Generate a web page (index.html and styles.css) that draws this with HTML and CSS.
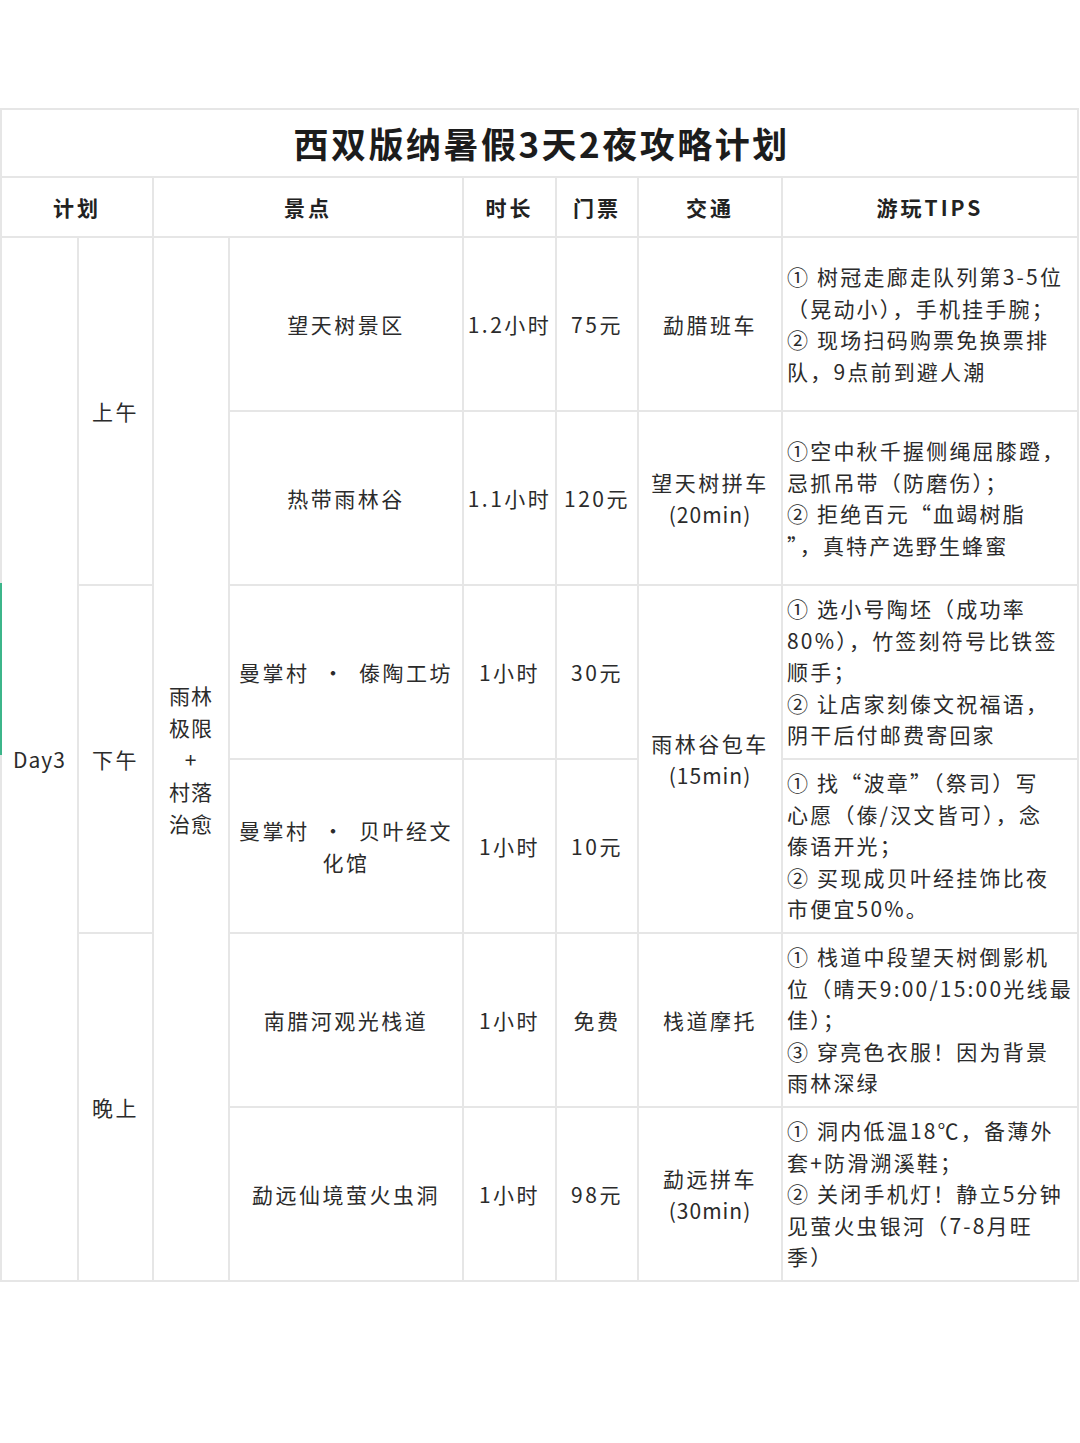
FILE: index.html
```html
<!DOCTYPE html>
<html lang="zh-CN">
<head>
<meta charset="utf-8">
<title>西双版纳暑假3天2夜攻略计划</title>
<link rel="stylesheet" href="styles.css">
</head>
<body>
<div class="page">
  <div class="edge-mark"></div>
  <table class="plan">
    <colgroup>
      <col class="c-day"><col class="c-part"><col class="c-theme"><col class="c-spot">
      <col class="c-time"><col class="c-ticket"><col class="c-traffic"><col class="c-tips">
    </colgroup>
    <tr class="title-row"><th colspan="8">西双版纳暑假3天2夜攻略计划</th></tr>
    <tr class="head-row">
      <th colspan="2">计划</th><th colspan="2">景点</th><th>时长</th><th>门票</th><th>交通</th><th>游玩TIPS</th>
    </tr>
    <tr class="data-row">
      <td rowspan="6" class="latin">Day3</td>
      <td rowspan="2">上午</td>
      <td rowspan="6" class="theme">雨林<br>极限<br>+<br>村落<br>治愈</td>
      <td>望天树景区</td>
      <td>1.2小时</td>
      <td>75元</td>
      <td>勐腊班车</td>
      <td class="tips">① 树冠走廊走队列第3-5位<br>（晃动小），手机挂手腕；<br>② 现场扫码购票免换票排<br>队，9点前到避人潮</td>
    </tr>
    <tr class="data-row">
      <td>热带雨林谷</td>
      <td>1.1小时</td>
      <td>120元</td>
      <td>望天树拼车<br><span class="latin">(20min)</span></td>
      <td class="tips">①空中秋千握侧绳屈膝蹬，<br>忌抓吊带（防磨伤）；<br>② 拒绝百元“血竭树脂<br>”，真特产选野生蜂蜜</td>
    </tr>
    <tr class="data-row">
      <td rowspan="2">下午</td>
      <td>曼掌村&ensp;·&ensp;傣陶工坊</td>
      <td>1小时</td>
      <td>30元</td>
      <td rowspan="2">雨林谷包车<br><span class="latin">(15min)</span></td>
      <td class="tips">① 选小号陶坯（成功率<br>80%），竹签刻符号比铁签<br>顺手；<br>② 让店家刻傣文祝福语，<br>阴干后付邮费寄回家</td>
    </tr>
    <tr class="data-row">
      <td>曼掌村&ensp;·&ensp;贝叶经文<br>化馆</td>
      <td>1小时</td>
      <td>10元</td>
      <td class="tips">① 找“波章”（祭司）写<br>心愿（傣/汉文皆可），念<br>傣语开光；<br>② 买现成贝叶经挂饰比夜<br>市便宜50%。</td>
    </tr>
    <tr class="data-row">
      <td rowspan="2">晚上</td>
      <td>南腊河观光栈道</td>
      <td>1小时</td>
      <td>免费</td>
      <td>栈道摩托</td>
      <td class="tips">① 栈道中段望天树倒影机<br>位（晴天9:00/15:00光线最<br>佳）；<br>③ 穿亮色衣服！因为背景<br>雨林深绿</td>
    </tr>
    <tr class="data-row">
      <td>勐远仙境萤火虫洞</td>
      <td>1小时</td>
      <td>98元</td>
      <td>勐远拼车<br><span class="latin">(30min)</span></td>
      <td class="tips">① 洞内低温18℃，备薄外<br>套+防滑溯溪鞋；<br>② 关闭手机灯！静立5分钟<br>见萤火虫银河（7-8月旺<br>季）</td>
    </tr>
  </table>
</div>
</body>
</html>
```

FILE: styles.css
```css
html, body {
  margin: 0;
  padding: 0;
  background: #ffffff;
}

body {
  font-family: "Noto Sans CJK SC", "Noto Sans", sans-serif;
  color: #2b2b2b;
}

.page {
  position: relative;
  width: 1080px;
  height: 1443px;
  padding-top: 108px;
  box-sizing: border-box;
}

.edge-mark {
  position: absolute;
  left: 0;
  top: 583px;
  width: 2px;
  height: 172px;
  background: #3cb58a;
}

.plan {
  border-collapse: collapse;
  table-layout: fixed;
  width: 1077px;
  border: 2px solid #e4e4e4;
}

.c-day { width: 77px; }
.c-part { width: 75px; }
.c-theme { width: 76px; }
.c-spot { width: 234px; }
.c-time { width: 93px; }
.c-ticket { width: 82px; }
.c-traffic { width: 144px; }
.c-tips { width: 296px; }

.plan th,
.plan td {
  border: 2px solid #e6e6e6;
  padding: 0 2px;
  text-align: center;
  vertical-align: middle;
  white-space: nowrap;
  font-size: 21px;
  line-height: 32px;
  letter-spacing: 2.5px;
}

.plan .latin {
  letter-spacing: 1px;
}

.title-row th {
  height: 66px;
  font-size: 35px;
  font-weight: 700;
  letter-spacing: 2.5px;
  color: #1c1c1c;
  padding-left: 6px;
}

.head-row th {
  height: 58px;
  font-size: 21px;
  font-weight: 700;
  letter-spacing: 3px;
  color: #222222;
}

.data-row td {
  height: 172px;
}

.plan td.theme {
  line-height: 32px;
  padding: 0;
  letter-spacing: 1px;
}

.plan td.tips {
  text-align: left;
  padding: 0 0 0 4px;
  line-height: 31.5px;
  letter-spacing: 2.2px;
}
```
